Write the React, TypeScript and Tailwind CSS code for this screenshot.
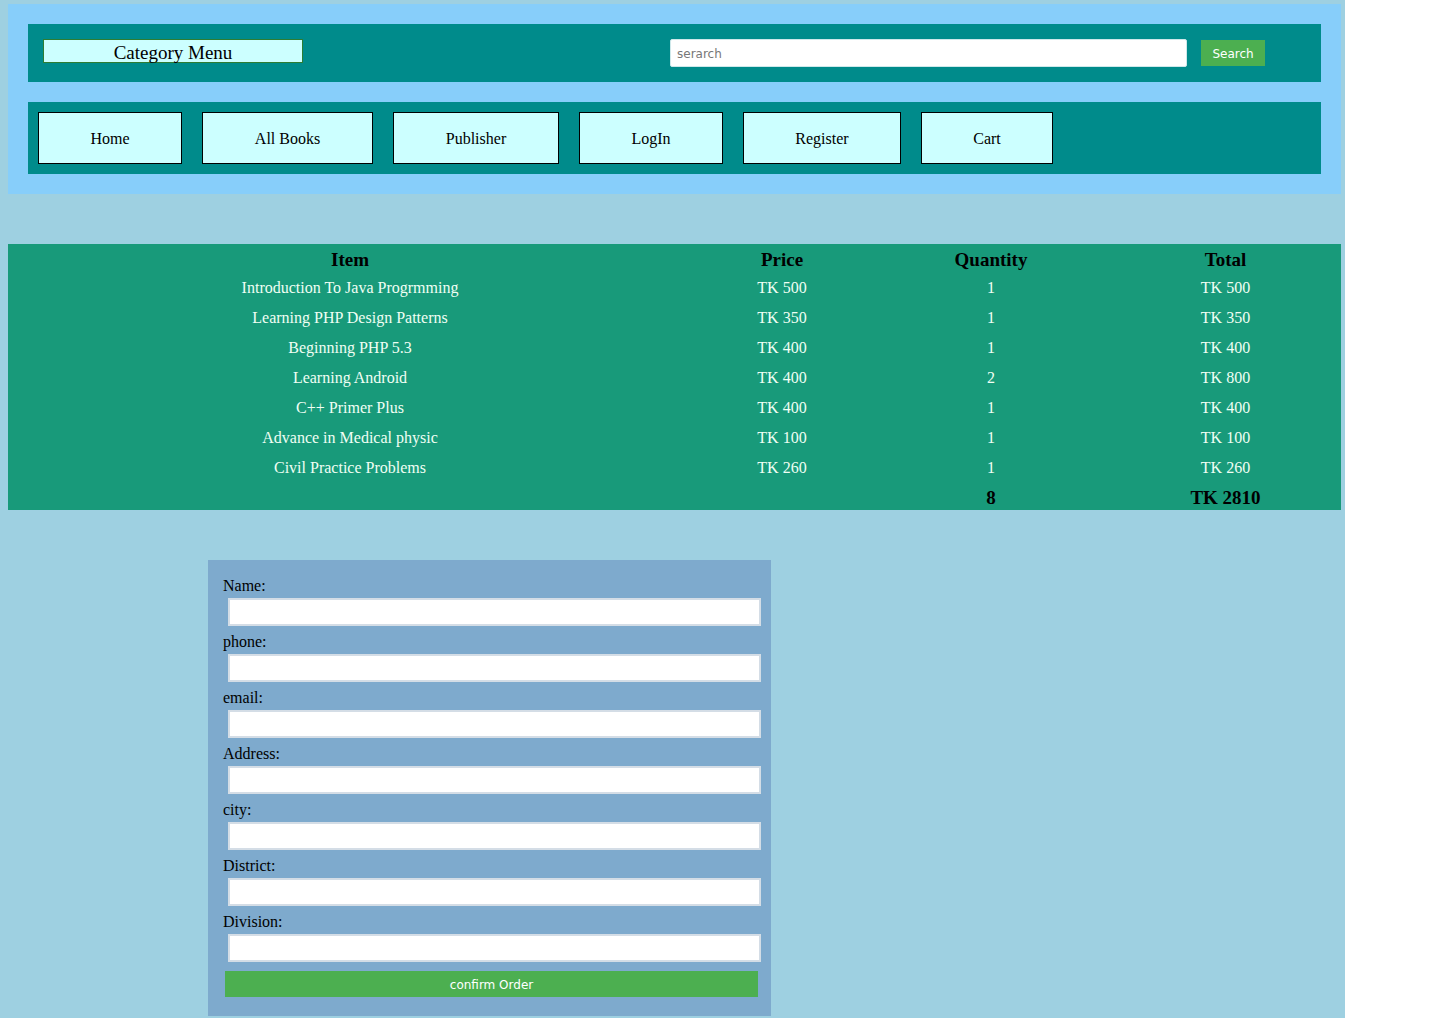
const navItems = [
  { label: "Home", width: "w-[144px]" },
  { label: "All Books", width: "w-[171px]" },
  { label: "Publisher", width: "w-[166px]" },
  { label: "LogIn", width: "w-[144px]" },
  { label: "Register", width: "w-[158px]" },
  { label: "Cart", width: "w-[132px]" },
];

const cartRows = [
  { item: "Introduction To Java Progrmming", price: 500, qty: 1 },
  { item: "Learning PHP Design Patterns", price: 350, qty: 1 },
  { item: "Beginning PHP 5.3", price: 400, qty: 1 },
  { item: "Learning Android", price: 400, qty: 2 },
  { item: "C++ Primer Plus", price: 400, qty: 1 },
  { item: "Advance in Medical physic", price: 100, qty: 1 },
  { item: "Civil Practice Problems", price: 260, qty: 1 },
];

const fields = ["Name:", "phone:", "email:", "Address:", "city:", "District:", "Division:"];

const Header = () => {
  return (
    <div className="bg-[#87cefa] p-5">
      <div className="flex h-[58px] items-start bg-[#008b8b] pl-[15px] pt-[15px]">
        <div className="flex h-6 w-[260px] items-center justify-center border border-[#2e7d32] bg-[#ccffff] pt-[2px] text-[19px] leading-none text-black">
          Category Menu
        </div>
        <input
          placeholder="serarch"
          className="ml-[367px] h-7 w-[517px] rounded-[2px] border border-[#cfe8ea] bg-white px-[6px] pt-px font-['DejaVu_Sans',sans-serif] text-[12px] text-gray-700 placeholder:text-[#777]"
        />
        <button className="ml-[14px] mt-px h-[26px] w-16 bg-[#4caf50] pt-px font-['DejaVu_Sans',sans-serif] text-[12px] text-white">
          Search
        </button>
      </div>
      <div className="mt-5 flex h-[72px] items-center gap-5 bg-[#008b8b] px-[10px]">
        {navItems.map((nav) => (
          <button
            key={nav.label}
            className={`h-[52px] border border-black bg-[#ccffff] pt-[2px] text-base text-black ${nav.width}`}
          >
            {nav.label}
          </button>
        ))}
      </div>
    </div>
  );
};

const CartTable = () => {
  const totalQty = cartRows.reduce((sum, r) => sum + r.qty, 0);
  const totalPrice = cartRows.reduce((sum, r) => sum + r.price * r.qty, 0);

  return (
    <div className="mt-[50px] bg-[#189a7a] text-center">
      <div className="grid h-7 grid-cols-[684px_180px_238px_1fr] items-center pt-[2px] text-[19px] font-bold text-black">
        <div>Item</div>
        <div>Price</div>
        <div>Quantity</div>
        <div>Total</div>
      </div>
      {cartRows.map((row) => (
        <div
          key={row.item}
          className="grid h-[30px] grid-cols-[684px_180px_238px_1fr] items-center pt-[2px] text-base text-[#f0fff4]"
        >
          <div>{row.item}</div>
          <div>TK {row.price}</div>
          <div>{row.qty}</div>
          <div>TK {row.price * row.qty}</div>
        </div>
      ))}
      <div className="grid h-7 grid-cols-[684px_180px_238px_1fr] items-center pt-[2px] text-[19px] font-bold text-black">
        <div />
        <div />
        <div>{totalQty}</div>
        <div>TK {totalPrice}</div>
      </div>
    </div>
  );
};

const OrderForm = () => {
  return (
    <form className="ml-[200px] mt-[50px] w-[563px] bg-[#7eaacd] px-[15px] pb-[19px] pt-[15px]">
      {fields.map((label) => (
        <div key={label} className="mb-[5px]">
          <label className="block pt-px text-base leading-5 text-black">{label}</label>
          <input className="ml-[5px] mt-[2px] block h-7 w-[533px] border-2 border-[#d4dde6] bg-white" />
        </div>
      ))}
      <button
        type="button"
        className="ml-[2px] mt-[4px] h-[26px] w-[533px] bg-[#4caf50] pt-px font-['DejaVu_Sans',sans-serif] text-[12px] text-white"
      >
        confirm Order
      </button>
    </form>
  );
};

export default function App() {
  return (
    <div className="min-h-screen bg-white font-['Liberation_Serif',serif]">
      <div className="w-[1345px] bg-[#9ed0e1] pb-[2px] pl-2 pr-1 pt-1">
        <Header />
        <CartTable />
        <OrderForm />
      </div>
    </div>
  );
}
